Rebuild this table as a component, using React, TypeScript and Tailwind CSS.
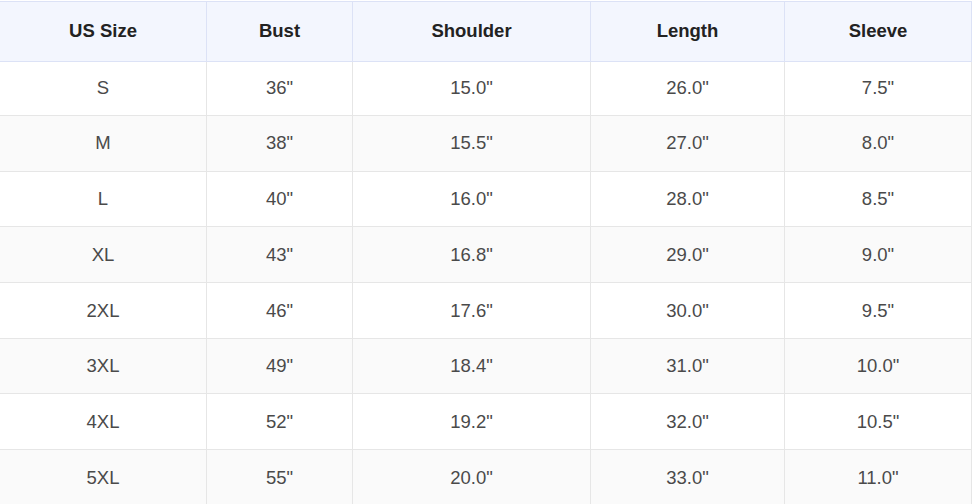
const headers = ["US Size", "Bust", "Shoulder", "Length", "Sleeve"];

const rows = [
  ["S", '36"', '15.0"', '26.0"', '7.5"'],
  ["M", '38"', '15.5"', '27.0"', '8.0"'],
  ["L", '40"', '16.0"', '28.0"', '8.5"'],
  ["XL", '43"', '16.8"', '29.0"', '9.0"'],
  ["2XL", '46"', '17.6"', '30.0"', '9.5"'],
  ["3XL", '49"', '18.4"', '31.0"', '10.0"'],
  ["4XL", '52"', '19.2"', '32.0"', '10.5"'],
  ["5XL", '55"', '20.0"', '33.0"', '11.0"'],
];

const widths = ["w-[207px]", "w-[146px]", "w-[238px]", "w-[194px]", "w-[187px]"];

export default function App() {
  return (
    <div className="bg-white w-[975px] h-[504px] overflow-hidden pt-px font-['Liberation_Sans',Arial,sans-serif]">
      <table className="table-fixed border-collapse w-[972px] -ml-px">
        <thead>
          <tr className="h-[59.5px] bg-[#f3f6fe]">
            {headers.map((h, i) => (
              <th
                key={h}
                className={`${widths[i]} border border-[#dce2f6] text-[18.5px] font-bold text-[#222] text-center`}
              >
                {h}
              </th>
            ))}
          </tr>
        </thead>
        <tbody>
          {rows.map((r, ri) => (
            <tr
              key={r[0]}
              className={`${ri === 0 ? "h-[54.5px]" : "h-[55.7px]"} ${ri % 2 === 1 ? "bg-[#fafafa]" : "bg-white"}`}
            >
              {r.map((c, ci) => (
                <td
                  key={ci}
                  className="border border-[#e6e6e6] text-[18.5px] text-[#4a4a4a] text-center"
                >
                  {c}
                </td>
              ))}
            </tr>
          ))}
        </tbody>
      </table>
    </div>
  );
}
